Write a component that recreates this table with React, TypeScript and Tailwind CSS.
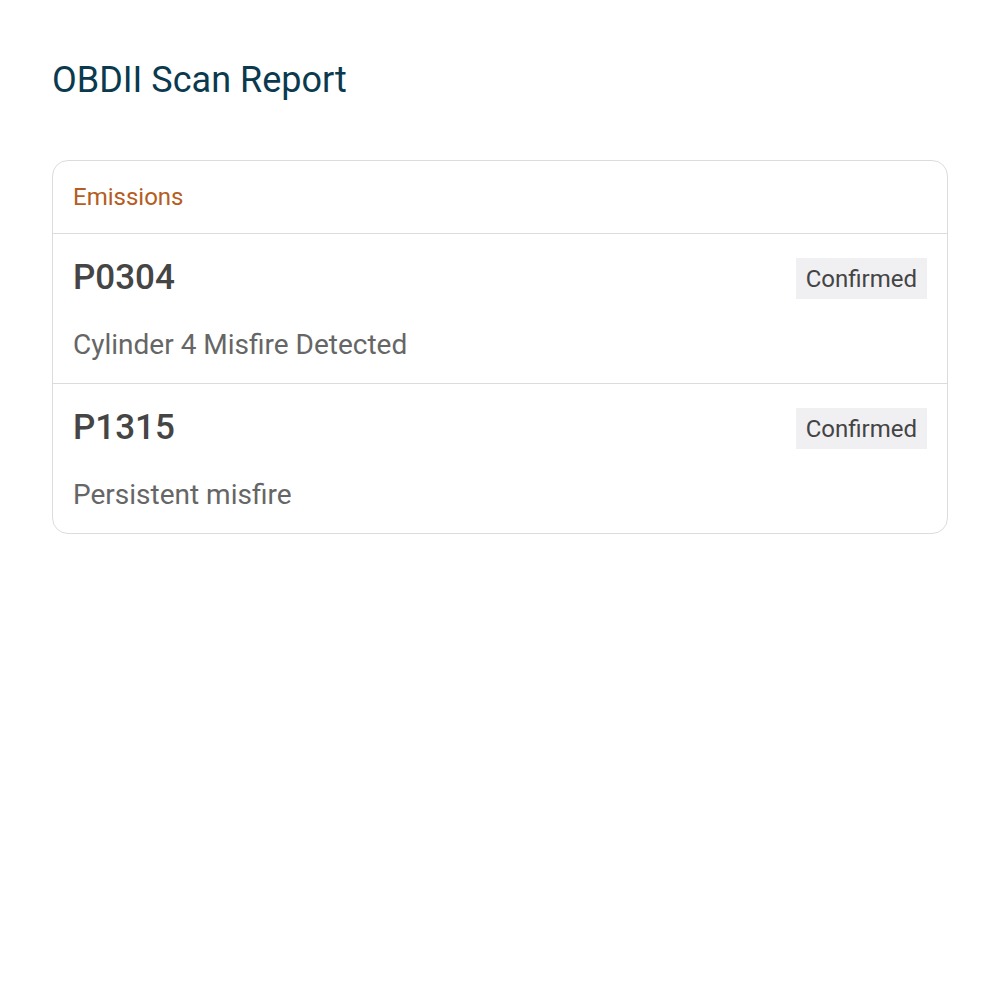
const codes = [
  { code: 'P0304', desc: 'Cylinder 4 Misfire Detected', status: 'Confirmed' },
  { code: 'P1315', desc: 'Persistent misfire', status: 'Confirmed' },
];

export default function App() {
  return (
    <div className="min-h-screen bg-white px-[52px] pt-[56px] font-['Roboto',sans-serif]">
      <h1 className="text-[36px] leading-[48px] text-[#0b3a4f]">OBDII Scan Report</h1>

      <div className="mt-[56px] rounded-2xl border border-[#dcdcdc] bg-white">
        <div className="flex h-[73px] items-center border-b border-[#dcdcdc] px-5">
          <span className="text-[24px] text-[#b55d1e]">Emissions</span>
        </div>
        {codes.map((c, i) => (
          <div
            key={c.code}
            className={`px-5 pt-6 pb-[20px] ${i < codes.length - 1 ? 'border-b border-[#dcdcdc]' : ''}`}
          >
            <div className="flex h-[41px] items-center justify-between">
              <span className="text-[35px] font-medium text-[#454545]">{c.code}</span>
              <span className="flex h-[41px] items-center bg-[#f0f0f3] px-[10px] text-[24px] text-[#444444]">
                {c.status}
              </span>
            </div>
            <p className="mt-[28px] text-[28px] leading-9 text-[#666666]">{c.desc}</p>
          </div>
        ))}
      </div>
    </div>
  );
}
